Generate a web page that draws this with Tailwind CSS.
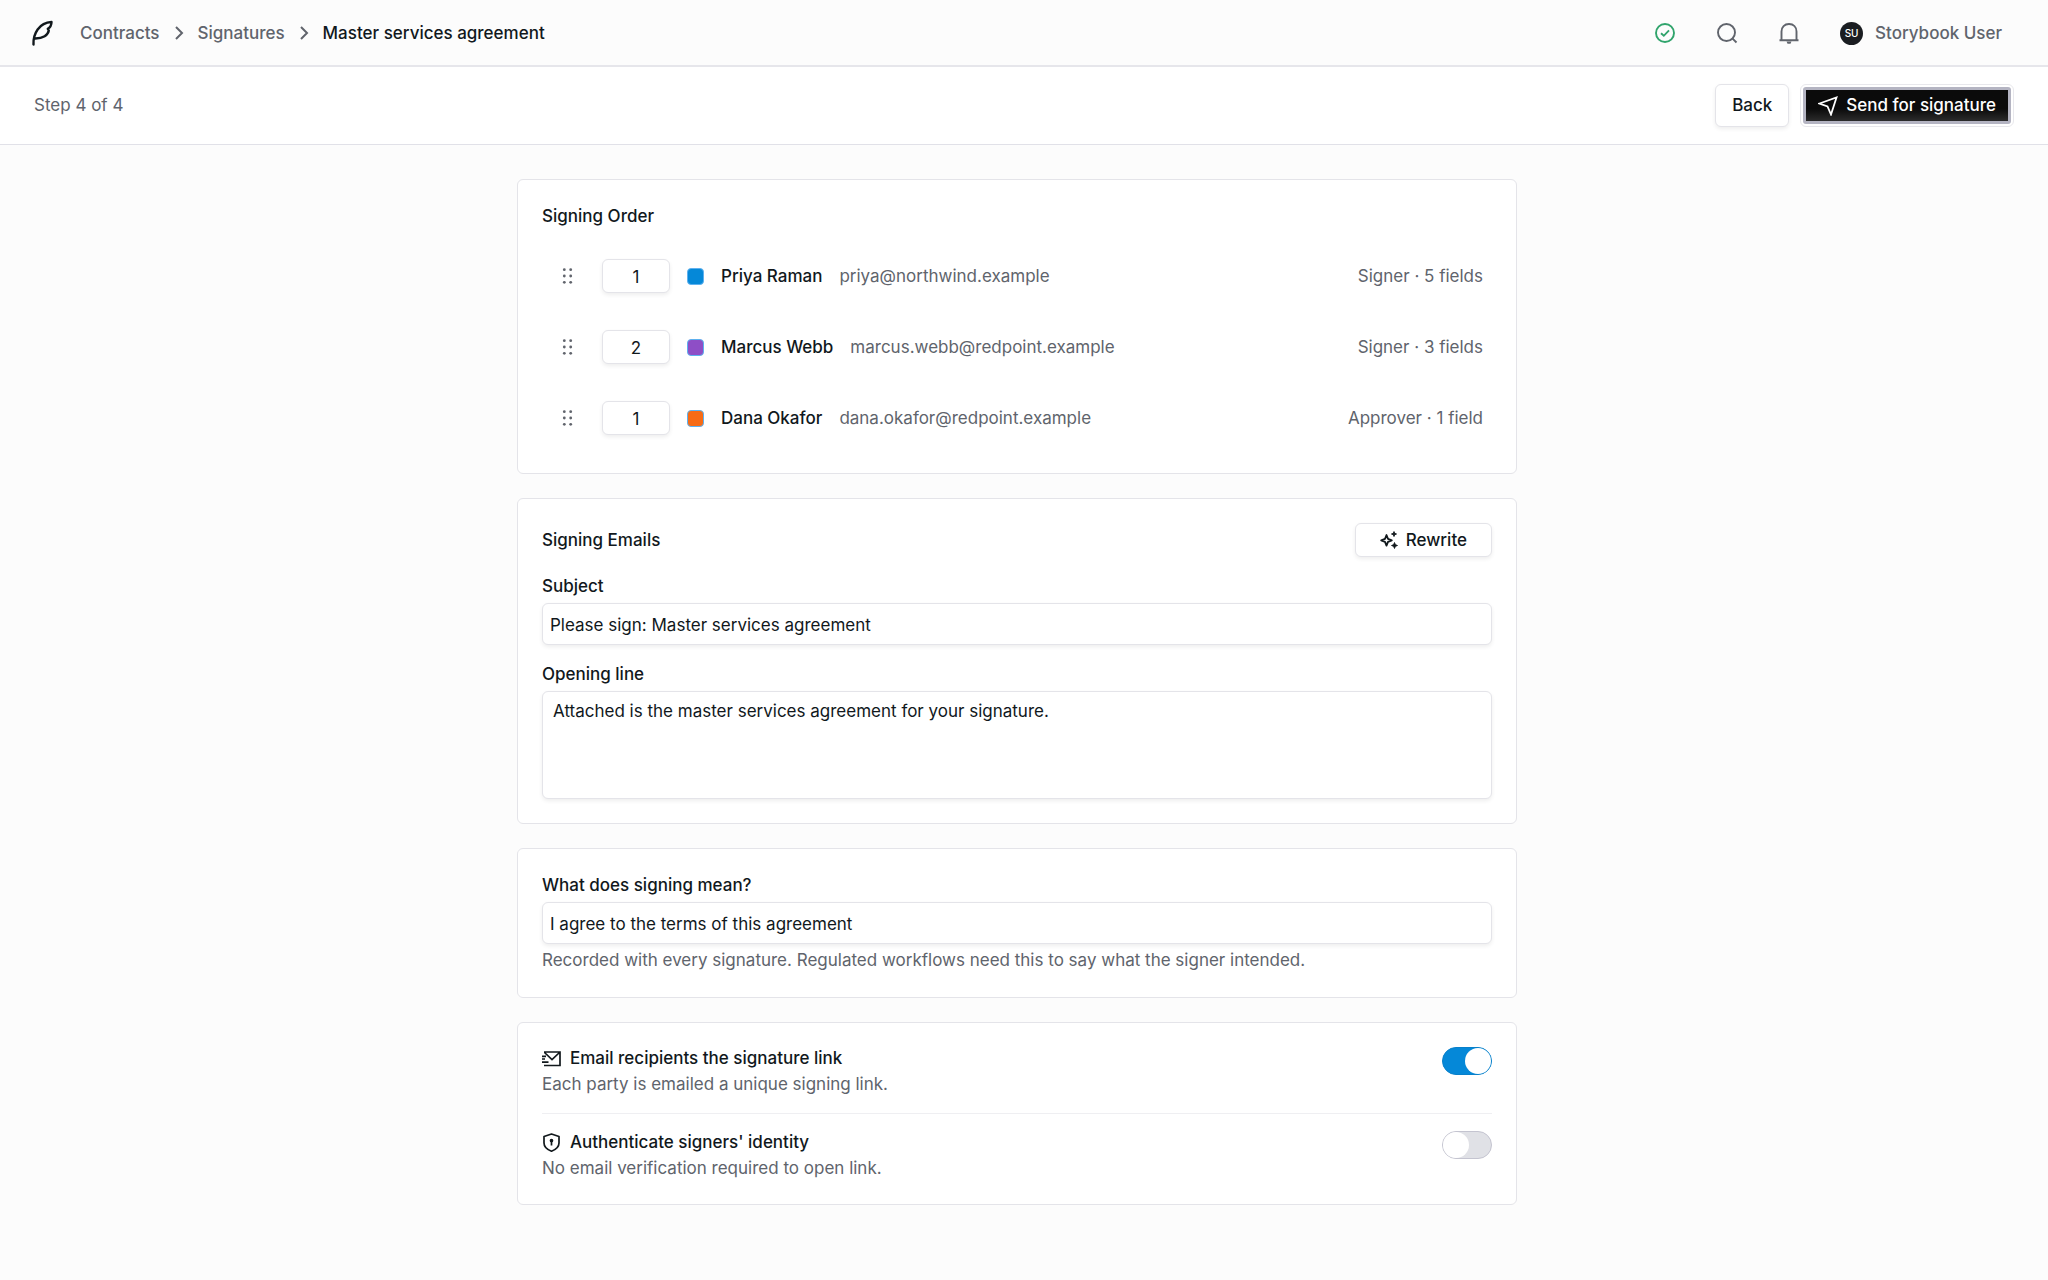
<!DOCTYPE html>
<html lang="en">
<head>
  <meta charset="UTF-8" />
  <meta name="viewport" content="width=device-width, initial-scale=1.0"/>
  <title>Master services agreement - Signatures</title>
  <script src="https://cdn.jsdelivr.net/npm/@tailwindcss/browser@4"></script>
</head>
<body class="min-h-screen bg-[#fcfcfc] font-['Inter',sans-serif] text-[17px] leading-[25px] text-[#11181c]">

  <!-- Top bar -->
  <header class="flex h-[67px] items-center justify-between border-b-2 border-[#e6e6eb] pr-[46px] pl-[29px]">
    <div class="flex items-center gap-[23px]">
      <a href="#" aria-label="Home">
        <svg class="h-7 w-7" viewBox="0 0 28 28" fill="none" stroke="currentColor" stroke-width="2.400" stroke-linejoin="round" stroke-linecap="round">
          <path d="M4.500 25.500C4 15 10 3.500 22.500 3C22.500 6 21 8.500 18.800 9.800L19.800 11.500C19 16 14 19.500 6.500 19.500"/>
        </svg>
      </a>
      <nav aria-label="Breadcrumb" class="flex items-center gap-[11px] pt-px font-medium text-[#60646c]">
        <a href="#">Contracts</a>
        <svg class="h-4 w-4" viewBox="0 0 16 16" fill="none" stroke="currentColor" stroke-width="2"><path d="M5 2L11 8L5 14"/></svg>
        <a href="#">Signatures</a>
        <svg class="h-4 w-4" viewBox="0 0 16 16" fill="none" stroke="currentColor" stroke-width="2"><path d="M5 2L11 8L5 14"/></svg>
        <a href="#" aria-current="page" class="text-[#11181c]">Master services agreement</a>
      </nav>
    </div>
    <div class="flex items-center gap-[40px] text-[#60646c]">
      <button type="button" aria-label="Status" class="text-[#30a46c]">
        <svg class="h-[22px] w-[22px]" viewBox="0 0 22 22" fill="none" stroke="currentColor" stroke-width="1.900"><circle cx="11" cy="11" r="9"/><path d="M7 11.300L9.800 13.800L15 8.300"/></svg>
      </button>
      <button type="button" aria-label="Search">
        <svg class="h-[22px] w-[22px]" viewBox="0 0 22 22" fill="none" stroke="currentColor" stroke-width="1.900"><circle cx="10.500" cy="10.500" r="8.500"/><path d="M16.300 16.300L20.500 20.500"/></svg>
      </button>
      <button type="button" aria-label="Notifications">
        <svg class="h-[22px] w-[22px]" viewBox="0 0 22 22" fill="none" stroke="currentColor" stroke-width="1.900"><path d="M1.500 18.300H20.500M3.500 18V9.500C3.500 5 6.500 2 11 2S18.500 5 18.500 9.500V18"/><path d="M8.500 19.500H13.500L12.500 21.800H9.500Z" fill="currentColor" stroke="none"/></svg>
      </button>
      <button type="button" class="flex items-center gap-[12px] pt-px">
        <span class="flex h-[23px] w-[23px] items-center justify-center rounded-full bg-[#1a1d21] text-[10px] font-medium text-white">SU</span>
        <span class="font-medium">Storybook User</span>
      </button>
    </div>
  </header>

  <!-- Step bar -->
  <div class="flex h-[78px] items-center justify-between border-b border-[#e1e1e8] bg-white px-[34px]">
    <p class="text-[#60646c]">Step 4 of 4</p>
    <div class="flex items-center gap-[11px]">
      <button type="button" class="h-[43px] rounded-md border border-[#e4e4e9] bg-white px-4 font-medium shadow-[0_2px_4px_rgb(0_0_0/0.07)]">Back</button>
      <button type="button" class="h-[43px] rounded-md border border-[#e8e8ec] bg-white p-[2px] font-medium text-white">
        <span class="flex h-full items-center gap-2 rounded-[3px] border-3 border-[#b4b4c2] bg-linear-to-b from-[#0b0b0b] from-60% to-[#2c2c2c] px-3">
          <svg class="h-5 w-5" viewBox="0 0 20 20" fill="none" stroke="currentColor" stroke-width="1.800"><path d="M1.500 7.500L18.500 1.500L13 18.500L9.500 10.500Z"/></svg>
          Send for signature
        </span>
      </button>
    </div>
  </div>

  <!-- Form -->
  <main class="mr-[14px] px-6 py-[34px]">
    <form class="mx-auto flex max-w-[1000px] flex-col gap-6">

      <section class="rounded-md border border-[#e4e4e9] bg-white p-6">
        <h2 class="mb-4 font-medium">Signing Order</h2>
        <ol class="flex flex-col gap-[9px]">
          <li class="flex h-[62px] items-center gap-[17px] px-[9px]">
            <button type="button" aria-label="Reorder Priya Raman" class="flex h-[34px] w-[34px] items-center justify-center text-[#60646c]">
              <svg class="h-[18px] w-[18px]" viewBox="0 0 18 18" fill="currentColor"><circle cx="5.300" cy="2.700" r="1.400"/><circle cx="11.700" cy="2.700" r="1.400"/><circle cx="5.300" cy="9" r="1.400"/><circle cx="11.700" cy="9" r="1.400"/><circle cx="5.300" cy="15.300" r="1.400"/><circle cx="11.700" cy="15.300" r="1.400"/></svg>
            </button>
            <input type="text" inputmode="numeric" aria-label="Order of Priya Raman" value="1" class="h-[34px] w-[68px] rounded-md border border-[#e4e4e9] bg-white pt-[2px] text-center shadow-[0_2px_4px_rgb(0_0_0/0.07)]" />
            <span class="h-[17px] w-[17px] rounded-[4px] border border-[#5eb1ef] bg-[#0588d8]"></span>
            <span class="font-medium">Priya Raman</span>
            <span class="text-[#60646c]">priya@northwind.example</span>
            <span class="ml-auto text-[#60646c]">Signer · 5 fields</span>
          </li>
          <li class="flex h-[62px] items-center gap-[17px] px-[9px]">
            <button type="button" aria-label="Reorder Marcus Webb" class="flex h-[34px] w-[34px] items-center justify-center text-[#60646c]">
              <svg class="h-[18px] w-[18px]" viewBox="0 0 18 18" fill="currentColor"><circle cx="5.300" cy="2.700" r="1.400"/><circle cx="11.700" cy="2.700" r="1.400"/><circle cx="5.300" cy="9" r="1.400"/><circle cx="11.700" cy="9" r="1.400"/><circle cx="5.300" cy="15.300" r="1.400"/><circle cx="11.700" cy="15.300" r="1.400"/></svg>
            </button>
            <input type="text" inputmode="numeric" aria-label="Order of Marcus Webb" value="2" class="h-[34px] w-[68px] rounded-md border border-[#e4e4e9] bg-white pt-[2px] text-center shadow-[0_2px_4px_rgb(0_0_0/0.07)]" />
            <span class="h-[17px] w-[17px] rounded-[4px] border border-[#5eb1ef] bg-[#8e4ec6]"></span>
            <span class="font-medium">Marcus Webb</span>
            <span class="text-[#60646c]">marcus.webb@redpoint.example</span>
            <span class="ml-auto text-[#60646c]">Signer · 3 fields</span>
          </li>
          <li class="flex h-[62px] items-center gap-[17px] px-[9px]">
            <button type="button" aria-label="Reorder Dana Okafor" class="flex h-[34px] w-[34px] items-center justify-center text-[#60646c]">
              <svg class="h-[18px] w-[18px]" viewBox="0 0 18 18" fill="currentColor"><circle cx="5.300" cy="2.700" r="1.400"/><circle cx="11.700" cy="2.700" r="1.400"/><circle cx="5.300" cy="9" r="1.400"/><circle cx="11.700" cy="9" r="1.400"/><circle cx="5.300" cy="15.300" r="1.400"/><circle cx="11.700" cy="15.300" r="1.400"/></svg>
            </button>
            <input type="text" inputmode="numeric" aria-label="Order of Dana Okafor" value="1" class="h-[34px] w-[68px] rounded-md border border-[#e4e4e9] bg-white pt-[2px] text-center shadow-[0_2px_4px_rgb(0_0_0/0.07)]" />
            <span class="h-[17px] w-[17px] rounded-[4px] border border-[#5eb1ef] bg-[#f76b15]"></span>
            <span class="font-medium">Dana Okafor</span>
            <span class="text-[#60646c]">dana.okafor@redpoint.example</span>
            <span class="ml-auto text-[#60646c]">Approver · 1 field</span>
          </li>
        </ol>
      </section>

      <section class="flex flex-col gap-[17px] rounded-md border border-[#e4e4e9] bg-white p-6">
        <div class="flex items-center justify-between">
          <h2 class="font-medium">Signing Emails</h2>
          <button type="button" class="flex h-[34px] items-center gap-2 rounded-md border border-[#e4e4e9] bg-white px-6 font-medium shadow-[0_2px_4px_rgb(0_0_0/0.07)]">
            <svg class="h-[18px] w-[18px]" viewBox="0 0 18 18" fill="none" stroke="currentColor" stroke-width="1.800" stroke-linejoin="round"><path d="M6.500 4L8 7.800L11.800 9.300L8 10.800L6.500 14.600L5 10.800L1.200 9.300L5 7.800Z"/><path d="M14 0.500L14.800 2.300L16.600 3L14.800 3.800L14 5.600L13.200 3.800L11.400 3L13.200 2.300ZM14.500 11.500L15.400 13.600L17.500 14.500L15.400 15.400L14.500 17.500L13.600 15.400L11.500 14.500L13.600 13.600Z" fill="currentColor" stroke-width="0.800"/></svg>
            Rewrite
          </button>
        </div>
        <div class="flex flex-col gap-1">
          <label for="subject" class="font-medium">Subject</label>
          <input type="text" id="subject" name="subject" value="Please sign: Master services agreement"
            class="h-[42px] w-full rounded-md border border-[#e4e4e9] bg-white px-[7px] pt-[2px] shadow-[0_2px_4px_rgb(0_0_0/0.07)]" />
        </div>
        <div class="flex flex-col gap-1">
          <label for="opening" class="font-medium">Opening line</label>
          <textarea id="opening" name="opening"
            class="h-[108px] w-full resize-none rounded-md border border-[#e4e4e9] bg-white px-[10px] py-[7px] shadow-[0_2px_4px_rgb(0_0_0/0.07)]">Attached is the master services agreement for your signature.</textarea>
        </div>
      </section>

      <section class="flex flex-col gap-1 rounded-md border border-[#e4e4e9] bg-white p-6">
        <label for="meaning" class="font-medium">What does signing mean?</label>
        <input type="text" id="meaning" name="meaning" aria-describedby="meaningHelp" value="I agree to the terms of this agreement"
          class="h-[42px] w-full rounded-md border border-[#e4e4e9] bg-white px-[7px] pt-[2px] shadow-[0_2px_4px_rgb(0_0_0/0.07)]" />
        <p id="meaningHelp" class="text-[#60646c]">Recorded with every signature. Regulated workflows need this to say what the signer intended.</p>
      </section>

      <section class="rounded-md border border-[#e4e4e9] bg-white px-6 pt-6 pb-[23px]">
        <div class="flex items-start justify-between border-b border-[#efeff2] pb-4">
          <div class="flex flex-col gap-[2px]">
            <label for="emailLink" class="flex h-[23px] items-center gap-[9px] font-medium">
              <svg class="h-[19px] w-[19px]" viewBox="0 0 19 19" fill="none" stroke="currentColor" stroke-width="1.700"><path d="M2 3H18V16.500H2M2.500 3.500L10 10.500L17.500 3.500M0 7.300H4M0 10H3M0 13.200H6.500"/></svg>
              Email recipients the signature link
            </label>
            <p class="text-[#60646c]">Each party is emailed a unique signing link.</p>
          </div>
          <input type="checkbox" role="switch" id="emailLink" checked
            class="h-7 w-[50px] appearance-none rounded-full border border-[#c4c4d0] bg-[#e0e1e6] before:block before:h-[26px] before:w-[26px] before:rounded-full before:bg-white checked:border-[#0880ca] checked:bg-[#0588d8] checked:before:ml-[22px]" />
        </div>
        <div class="flex items-start justify-between pt-[17px]">
          <div class="flex flex-col gap-[2px]">
            <label for="authSigners" class="flex h-[23px] items-center gap-[9px] font-medium">
              <svg class="h-[19px] w-[19px]" viewBox="0 0 19 19" fill="none" stroke="currentColor" stroke-width="1.700" stroke-linejoin="round"><path d="M9.500 1L17 3.500V10C17 14 14 16.500 9.500 18.200C5 16.500 2 14 2 10V3.500Z"/><path d="M9.500 7V12.500"/><circle cx="9.500" cy="7.500" r="1" fill="currentColor"/></svg>
              Authenticate signers' identity
            </label>
            <p class="text-[#60646c]">No email verification required to open link.</p>
          </div>
          <input type="checkbox" role="switch" id="authSigners"
            class="h-7 w-[50px] appearance-none rounded-full border border-[#c4c4d0] bg-[#e0e1e6] before:block before:h-[26px] before:w-[26px] before:rounded-full before:bg-white checked:border-[#0880ca] checked:bg-[#0588d8] checked:before:ml-[22px]" />
        </div>
      </section>
    </form>
  </main>
</body>
</html>
